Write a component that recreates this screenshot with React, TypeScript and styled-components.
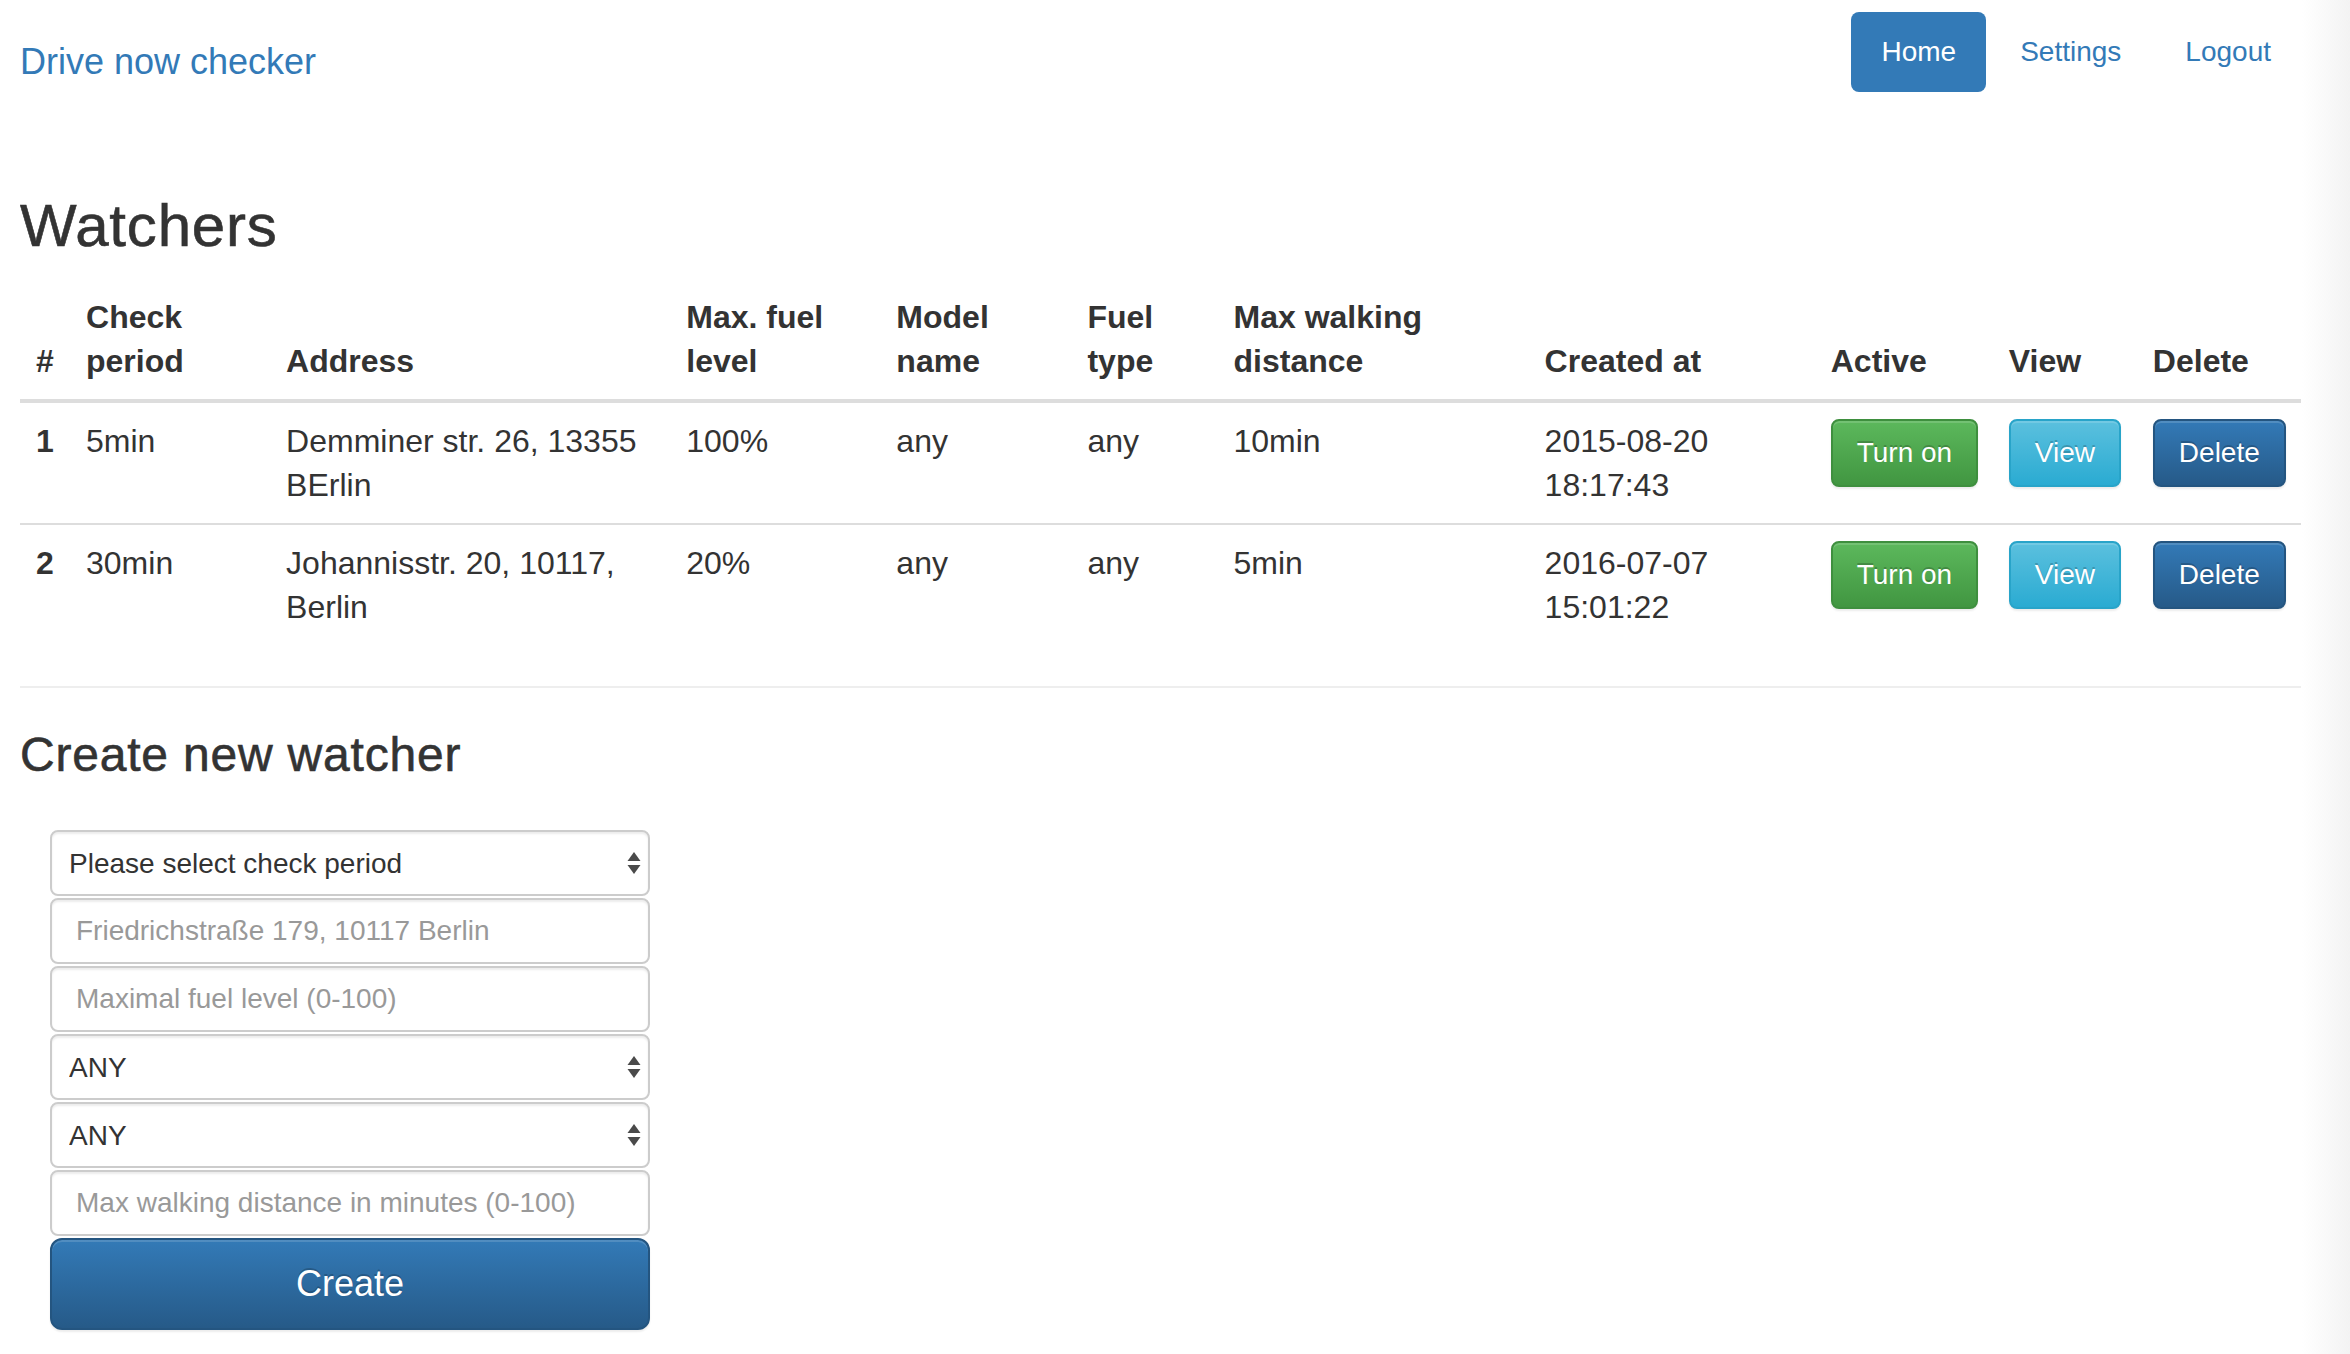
import React from "react";
import styled, { createGlobalStyle, css } from "styled-components";

const GlobalStyle = createGlobalStyle`
  html, body {
    margin: 0;
    padding: 0;
  }
  body {
    font-family: "Liberation Sans", Arial, Helvetica, sans-serif;
    color: #333;
    background: #fff;
  }
  * { box-sizing: border-box; }
`;

const Page = styled.div`
  min-height: 1354px;
  padding: 12px 49px 0 20px;
  background: linear-gradient(to right, #fff 0, #fff calc(100% - 48px), #f3f3f3 100%);
`;

const Header = styled.header`
  display: flex;
  justify-content: space-between;
  align-items: flex-start;
  height: 100px;
`;

const Brand = styled.a`
  display: block;
  font-size: 36px;
  line-height: 40px;
  padding: 30px 0;
  color: #337ab7;
  text-decoration: none;
`;

const Nav = styled.nav`
  display: flex;
  gap: 4px;
`;

const Pill = styled.a<{ $active?: boolean }>`
  display: block;
  padding: 20px 30px;
  font-size: 28px;
  line-height: 40px;
  border-radius: 8px;
  text-decoration: none;
  color: #337ab7;
  ${(p) =>
    p.$active &&
    css`
      background: #337ab7;
      color: #fff;
    `}
`;

const headingBase = css`
  font-weight: 500;
  -webkit-text-stroke: 0.6px currentColor;
  letter-spacing: 0.8px;
`;

const Title = styled.h2`
  ${headingBase}
  font-size: 60px;
  line-height: 66px;
  margin: 81px 0 20px;
`;

const SubTitle = styled.h3`
  ${headingBase}
  font-size: 48px;
  line-height: 53px;
  margin: 0 0 20px;
`;

const Table = styled.table`
  width: 100%;
  table-layout: fixed;
  border-collapse: collapse;
  margin-bottom: 41px;
  font-size: 32px;
  line-height: 44px;
`;

const Th = styled.th`
  text-align: left;
  vertical-align: bottom;
  font-weight: bold;
  padding: 16px;
  border-bottom: 4px solid #ddd;
`;

const Td = styled.td`
  vertical-align: top;
  padding: 16px;
  border-top: 2px solid #ddd;
`;

const IndexCell = styled(Td)`
  font-weight: bold;
`;

const variants = {
  success: css`
    background-image: linear-gradient(to bottom, #5cb85c 0, #419641 100%);
    border-color: #3e8f3e;
  `,
  info: css`
    background-image: linear-gradient(to bottom, #5bc0de 0, #2aabd2 100%);
    border-color: #28a4c9;
  `,
  primary: css`
    background-image: linear-gradient(to bottom, #337ab7 0, #265a88 100%);
    border-color: #245580;
  `,
};

type Variant = keyof typeof variants;

const Button = styled.button<{ $variant: Variant }>`
  display: inline-block;
  font-family: inherit;
  font-size: 28px;
  line-height: 40px;
  padding: 12px 24px;
  border: 2px solid transparent;
  border-radius: 8px;
  color: #fff;
  text-shadow: 0 -2px 0 rgba(0, 0, 0, 0.2);
  box-shadow: inset 0 2px 0 rgba(255, 255, 255, 0.15), 0 2px 2px rgba(0, 0, 0, 0.075);
  cursor: pointer;
  white-space: nowrap;
  ${(p) => variants[p.$variant]}
`;

const Divider = styled.hr`
  border: 0;
  border-top: 2px solid #eee;
  margin: 0 0 40px;
`;

const Form = styled.form`
  width: 600px;
  margin: 49px 0 0 30px;
  display: flex;
  flex-direction: column;
  gap: 2px;
`;

const fieldBase = css`
  display: block;
  width: 100%;
  height: 66px;
  font-family: inherit;
  font-size: 28px;
  color: #555;
  background: #fff;
  border: 2px solid #ccc;
  border-radius: 8px;
  box-shadow: inset 0 2px 2px rgba(0, 0, 0, 0.075);
  outline: none;
`;

const Input = styled.input`
  ${fieldBase}
  padding: 0 24px;
  &::placeholder {
    color: #999;
  }
`;

const SelectWrap = styled.div`
  position: relative;
`;

const Select = styled.select`
  ${fieldBase}
  appearance: none;
  -webkit-appearance: none;
  padding: 0 40px 0 17px;
  color: #333;
`;

const Arrows = styled.svg`
  position: absolute;
  right: 9px;
  top: 22px;
  width: 14px;
  height: 22px;
  pointer-events: none;
`;

const CreateButton = styled(Button)`
  display: block;
  width: 100%;
  font-size: 36px;
  line-height: 48px;
  padding: 20px 32px;
  border-radius: 12px;
  margin-top: 0;
`;

const SelectField = ({ children }: { children: React.ReactNode }) => (
  <SelectWrap>
    <Select defaultValue="">{children}</Select>
    <Arrows viewBox="0 0 14 22">
      <polygon points="7,0 13.5,9 0.5,9" fill="#4a4a4a" />
      <polygon points="0.5,13 13.5,13 7,22" fill="#4a4a4a" />
    </Arrows>
  </SelectWrap>
);

const watchers = [
  {
    id: 1,
    period: "5min",
    address: "Demminer str. 26, 13355 BErlin",
    fuel: "100%",
    model: "any",
    type: "any",
    walking: "10min",
    created: "2015-08-20 18:17:43",
  },
  {
    id: 2,
    period: "30min",
    address: "Johannisstr. 20, 10117, Berlin",
    fuel: "20%",
    model: "any",
    type: "any",
    walking: "5min",
    created: "2016-07-07 15:01:22",
  },
];

const colWidths = [50, 200, 400, 210, 191, 146, 311, 286, 178, 144, 164];

export default function App() {
  return (
    <>
      <GlobalStyle />
      <Page>
        <Header>
          <Brand href="#">Drive now checker</Brand>
          <Nav>
            <Pill href="#" $active>
              Home
            </Pill>
            <Pill href="#">Settings</Pill>
            <Pill href="#">Logout</Pill>
          </Nav>
        </Header>

        <Title>Watchers</Title>
        <Table>
          <colgroup>
            {colWidths.map((w, i) => (
              <col key={i} style={{ width: w }} />
            ))}
          </colgroup>
          <thead>
            <tr>
              <Th>#</Th>
              <Th>Check period</Th>
              <Th>Address</Th>
              <Th>Max. fuel level</Th>
              <Th>Model name</Th>
              <Th>Fuel type</Th>
              <Th>Max walking distance</Th>
              <Th>Created at</Th>
              <Th>Active</Th>
              <Th>View</Th>
              <Th>Delete</Th>
            </tr>
          </thead>
          <tbody>
            {watchers.map((w) => (
              <tr key={w.id}>
                <IndexCell>{w.id}</IndexCell>
                <Td>{w.period}</Td>
                <Td>{w.address}</Td>
                <Td>{w.fuel}</Td>
                <Td>{w.model}</Td>
                <Td>{w.type}</Td>
                <Td>{w.walking}</Td>
                <Td>{w.created}</Td>
                <Td>
                  <Button $variant="success">Turn on</Button>
                </Td>
                <Td>
                  <Button $variant="info">View</Button>
                </Td>
                <Td>
                  <Button $variant="primary">Delete</Button>
                </Td>
              </tr>
            ))}
          </tbody>
        </Table>

        <Divider />

        <SubTitle>Create new watcher</SubTitle>
        <Form onSubmit={(e) => e.preventDefault()}>
          <SelectField>
            <option value="">Please select check period</option>
            <option value="5">5min</option>
            <option value="30">30min</option>
          </SelectField>
          <Input placeholder="Friedrichstraße 179, 10117 Berlin" />
          <Input placeholder="Maximal fuel level (0-100)" />
          <SelectField>
            <option value="">ANY</option>
          </SelectField>
          <SelectField>
            <option value="">ANY</option>
          </SelectField>
          <Input placeholder="Max walking distance in minutes (0-100)" />
          <CreateButton $variant="primary" type="submit">
            Create
          </CreateButton>
        </Form>
      </Page>
    </>
  );
}
